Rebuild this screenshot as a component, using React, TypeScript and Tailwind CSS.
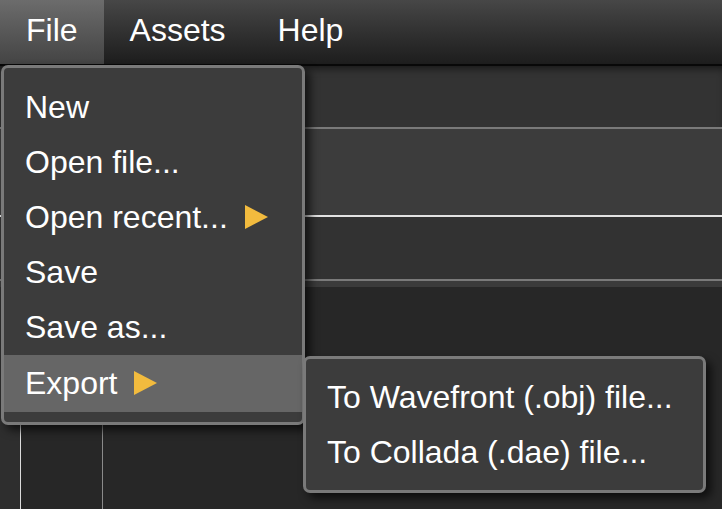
import { ReactNode } from "react";

const Arrow = () => (
    <svg width="23" height="24" viewBox="0 0 23 24" className="ml-[17px] shrink-0">
        <polygon points="0,0 23,12 0,24" fill="#f2bb3e" />
    </svg>
);

const MenuItem = ({ children, active }: { children: ReactNode; active?: boolean }) => (
    <div className={`flex items-center px-[21px] ${active ? "h-[57px] bg-[#666666]" : "h-[55.2px]"}`}>
        {children}
    </div>
);

const TopItem = ({ label, open }: { label: string; open?: boolean }) => (
    <div
        className={`flex h-full items-center px-[26px] pb-[4px] ${
            open ? "bg-gradient-to-b from-[#6c6c6c] to-[#444444]" : ""
        }`}
    >
        {label}
    </div>
);

export default function App() {
    return (
        <div className="relative h-[509px] w-[722px] overflow-hidden bg-[#262626] font-['Liberation_Sans',Arial,sans-serif] text-[32px] text-white">
            {/* menubar */}
            <div className="flex h-[64px] bg-gradient-to-b from-[#474747] to-[#1d1d1d]">
                <TopItem label="File" open />
                <TopItem label="Assets" />
                <TopItem label="Help" />
            </div>
            <div className="h-[2px] bg-[#080808]" />

            {/* panels */}
            <div className="h-[61px] bg-[#333333] shadow-[inset_0_6px_8px_-4px_rgba(0,0,0,0.6)]" />
            <div className="h-[2px] bg-[#7a7a7a]" />
            <div className="h-[86px] bg-[#3c3c3c]" />
            <div className="h-[2px] bg-[#e2e2e2]" />
            <div className="h-[62px] bg-[#323232]" />
            <div className="h-[2px] bg-[#7a7a7a]" />
            <div className="h-[6px] bg-[#3b3b3b]" />
            <div className="flex h-[222px]">
                <div className="w-[20px] bg-[#2e2e2e]" />
                <div className="w-[82px] border-l-[1.5px] border-[#dcdcdc] bg-[#272727]" />
                <div className="flex-1 border-l-[1.5px] border-[#8a8a8a] bg-[#272727]" />
            </div>

            {/* File menu */}
            <div className="absolute left-[1px] top-[65px] w-[304px] rounded-[7px] border-[3px] border-[#7a7a7a] bg-[#3c3c3c] pb-[10px] pt-[11px] shadow-[5px_5px_10px_rgba(0,0,0,0.65)]">
                <MenuItem>New</MenuItem>
                <MenuItem>Open file...</MenuItem>
                <MenuItem>
                    Open recent...
                    <Arrow />
                </MenuItem>
                <MenuItem>Save</MenuItem>
                <MenuItem>Save as...</MenuItem>
                <MenuItem active>
                    Export
                    <Arrow />
                </MenuItem>
            </div>

            {/* Export submenu */}
            <div className="absolute left-[303px] top-[356px] w-[403px] rounded-[7px] border-[3px] border-[#7a7a7a] bg-[#3c3c3c] pb-[11px] pt-[10px] shadow-[5px_5px_10px_rgba(0,0,0,0.65)]">
                <div className="flex h-[55px] items-center px-[21px]">To Wavefront (.obj) file...</div>
                <div className="flex h-[55px] items-center px-[21px]">To Collada (.dae) file...</div>
            </div>
        </div>
    );
}
